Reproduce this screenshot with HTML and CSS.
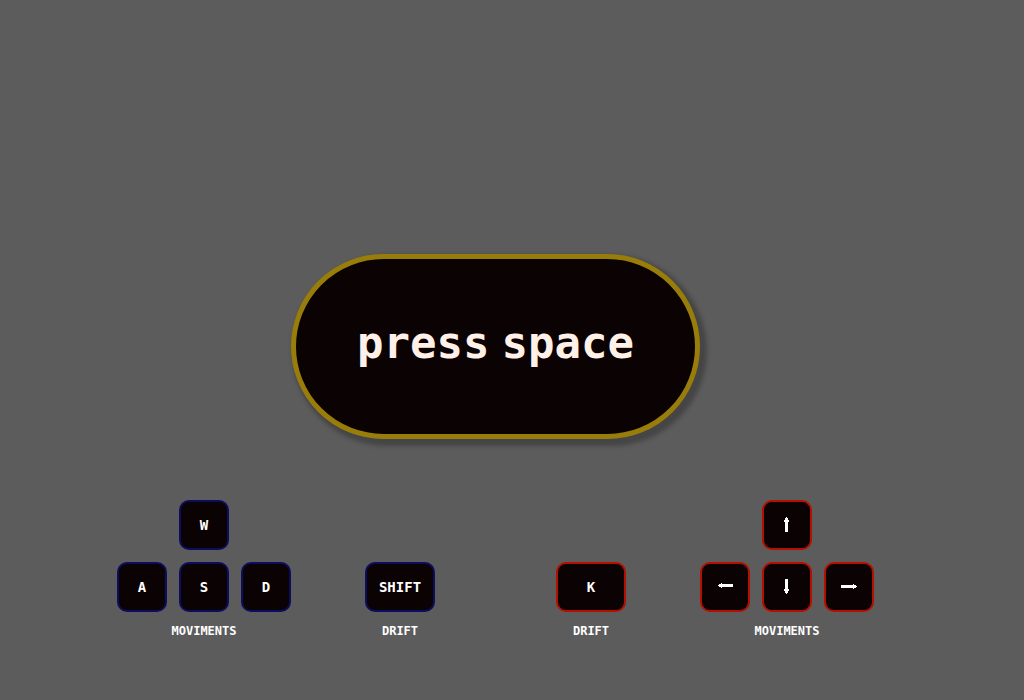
FILE: index.html
```html
<!DOCTYPE html>
<html lang="en">
<head>
  <meta charset="utf-8">
  <meta name="viewport" content="width=device-width, initial-scale=1">
  <title>Press space</title>
  <link rel="stylesheet" href="styles.css">
</head>
<body>
  <main class="screen">
    <button class="start" type="button"><span>press</span> <span>space</span></button>
    <section class="controls">
      <div class="player player-blue">
        <div class="group">
          <div class="pad">
            <kbd class="key key-top">W</kbd>
            <kbd class="key">A</kbd>
            <kbd class="key">S</kbd>
            <kbd class="key">D</kbd>
          </div>
          <p class="caption">MOVIMENTS</p>
        </div>
        <div class="group">
          <kbd class="key key-wide">SHIFT</kbd>
          <p class="caption">DRIFT</p>
        </div>
      </div>
      <div class="player player-red">
        <div class="group">
          <kbd class="key key-wide">K</kbd>
          <p class="caption">DRIFT</p>
        </div>
        <div class="group">
          <div class="pad">
            <kbd class="key key-top"><svg class="arrow" viewBox="0 0 16 16" role="img" aria-label="Up"><path d="M7 0H8V1H9V3H10V5H9V15H6V5H5V3H6V1H7Z"/></svg></kbd>
            <kbd class="key"><svg class="arrow" viewBox="0 0 16 16" role="img" aria-label="Left"><path d="M1 6H2V5H4V4H5V5H16V8H5V9H4V8H2V7H1Z"/></svg></kbd>
            <kbd class="key"><svg class="arrow" viewBox="0 0 16 16" role="img" aria-label="Down"><path d="M7 15H8V14H9V12H10V10H9V0H6V10H5V12H6V14H7Z"/></svg></kbd>
            <kbd class="key"><svg class="arrow" viewBox="0 0 16 16" role="img" aria-label="Right"><path d="M16 7H15V6H13V5H12V6H0V9H12V10H13V9H15V8H16Z"/></svg></kbd>
          </div>
          <p class="caption">MOVIMENTS</p>
        </div>
      </div>
    </section>
  </main>
</body>
</html>
```
FILE: styles.css
```css
* {
  box-sizing: border-box;
}

body {
  margin: 0;
  background: #5c5c5c;
  color: #fff;
  font-family: "DejaVu Sans Mono", "Liberation Mono", monospace;
  font-weight: 700;
}

.screen {
  display: flex;
  flex-direction: column;
  align-items: center;
  justify-content: flex-end;
  gap: 61px;
  min-height: 100vh;
  padding: 24px 33px 61px 0;
}

.start {
  display: flex;
  gap: 12px;
  padding: 59px 61px 66px;
  border: 5px solid #997d0a;
  border-radius: 100px;
  background: #0b0203;
  box-shadow: 4px 4px 4px 3px rgba(0, 0, 0, 0.25);
  color: #fff1e8;
  font: inherit;
  font-size: 44px;
  line-height: 50px;
}

.controls {
  display: flex;
  align-items: flex-end;
  gap: 121px;
}

.player {
  display: flex;
  align-items: flex-end;
  gap: 74px;
}

.player-blue {
  --edge: #0d0d5e;
}

.player-red {
  --edge: #b50f00;
}

.group {
  display: flex;
  flex-direction: column;
  align-items: center;
  gap: 11px;
}

.pad {
  display: grid;
  grid-template-columns: repeat(3, 50px);
  gap: 12px;
}

.key {
  display: flex;
  align-items: center;
  justify-content: center;
  height: 50px;
  border: 2px solid var(--edge);
  border-radius: 10px;
  background: #0b0203;
  font: inherit;
  font-size: 14px;
  line-height: 16px;
}

.key-top {
  grid-column: 1 / -1;
  justify-self: center;
  width: 50px;
}

.key-wide {
  width: 70px;
}

.arrow {
  width: 16px;
  height: 16px;
  fill: #fff;
}

.caption {
  width: 70px;
  margin: 0;
  font-size: 12px;
  line-height: 16px;
  text-align: center;
}
```
